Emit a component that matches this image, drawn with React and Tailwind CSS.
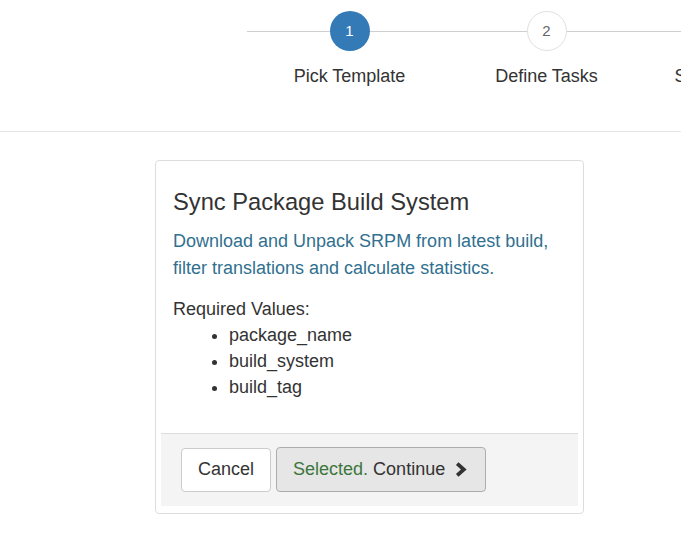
export default function App() {
  const font = { fontFamily: '"Liberation Sans", Arial, sans-serif' };
  return (
    <div className="w-[681px] h-[553px] bg-white overflow-hidden text-[#333]" style={font}>
      {/* Stepper */}
      <div className="relative h-[132px] border-b border-[#e5e5e5]">
        <div className="absolute left-[247px] right-0 top-[31px] h-px bg-[#cfcfcf]" />
        <div className="relative flex pl-[251px] pt-[11px] w-[1000px]">
          <div className="w-[197px] flex flex-col items-center">
            <div className="w-10 h-10 rounded-full bg-[#337ab7] text-white flex items-center justify-center text-[15px]">1</div>
            <div className="mt-[15px] text-[18px] leading-[20px]">Pick Template</div>
          </div>
          <div className="w-[197px] flex flex-col items-center">
            <div className="w-10 h-10 rounded-full bg-white border border-[#e0e0e0] text-[#666] flex items-center justify-center text-[15px]">2</div>
            <div className="mt-[15px] text-[18px] leading-[20px]">Define Tasks</div>
          </div>
          <div className="w-[197px] flex flex-col items-center">
            <div className="w-10 h-10 rounded-full bg-white border border-[#e0e0e0] text-[#666] flex items-center justify-center text-[15px]">3</div>
            <div className="mt-[15px] text-[18px] leading-[20px] whitespace-nowrap">Schedule &amp; Save</div>
          </div>
        </div>
      </div>

      {/* Card */}
      <div className="ml-[155px] mt-[28px] w-[429px] border border-[#dddddd] rounded-[4px] bg-white">
        <div className="px-[17px] pt-[26px] pb-[33px]">
          <h3 className="text-[23.7px] leading-[30px]">Sync Package Build System</h3>
          <p className="mt-[11px] text-[18px] leading-[27px] text-[#31708f]">
            Download and Unpack SRPM from latest build,<br />filter translations and calculate statistics.
          </p>
          <div className="mt-[14px] text-[18px] leading-[26px]">Required Values:</div>
          <ul className="pl-[56px] text-[18px] leading-[26px] list-disc">
            <li>package_name</li>
            <li>build_system</li>
            <li>build_tag</li>
          </ul>
        </div>
        <div className="mx-[5px] mb-[7px] bg-[#f4f4f4] border-t border-[#dddddd] pt-[13px] pb-[14px] pl-[20px] flex items-center gap-[5px]">
          <button className="h-[44px] px-[16px] bg-white border border-[#cccccc] rounded-[4px] text-[18px] text-[#333]">Cancel</button>
          <button className="h-[45px] pl-[16px] pr-[18px] bg-[#e6e6e6] border border-[#adadad] rounded-[4px] text-[18px] flex items-center gap-[9px]">
            <span>
              <span className="text-[#3c763d]">Selected.</span> <span className="text-[#333]">Continue</span>
            </span>
            <svg width="13" height="15" viewBox="0 0 13 15">
              <path d="M3.2 1.6 L9.8 7.5 L3.2 13.4" fill="none" stroke="#333" strokeWidth="3.8" strokeLinejoin="miter" />
            </svg>
          </button>
        </div>
      </div>
    </div>
  );
}
